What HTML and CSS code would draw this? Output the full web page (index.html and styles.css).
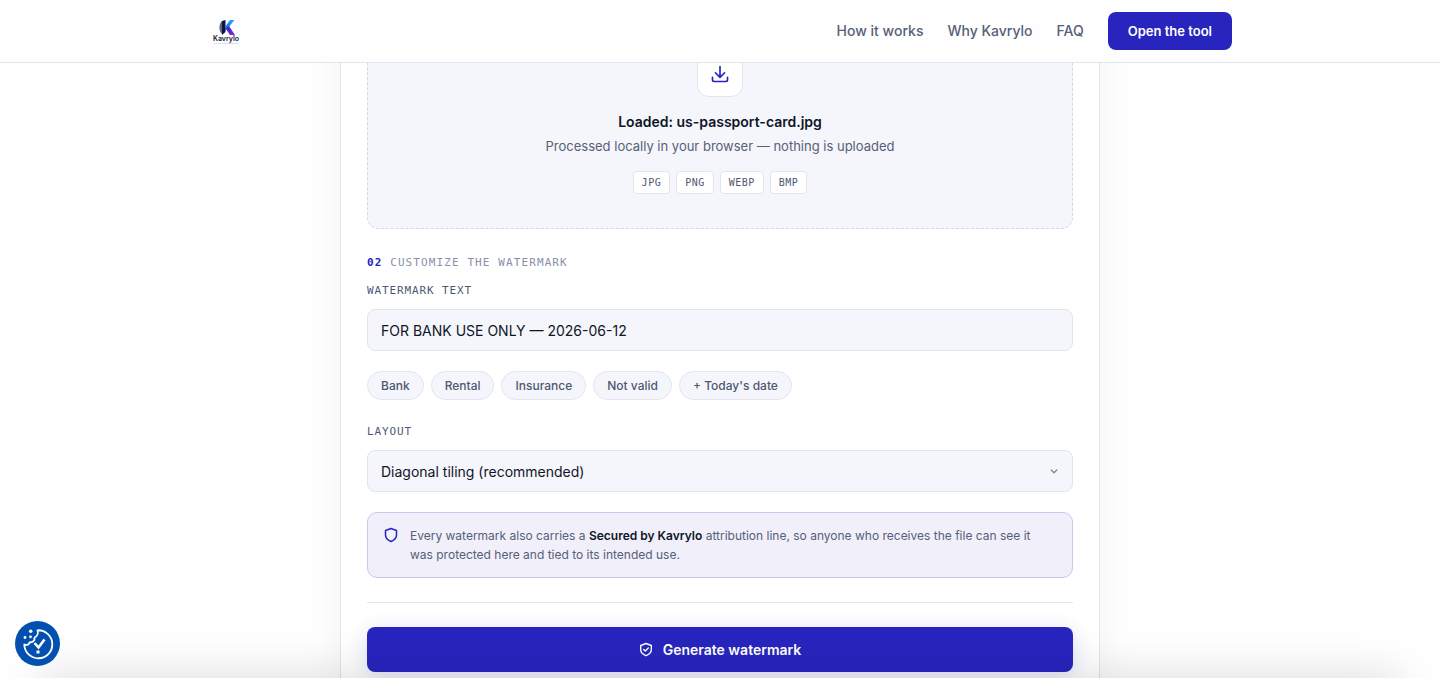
FILE: index.html
```
<!DOCTYPE html>
<html lang="en">

<head>
    <meta charset="UTF-8">
    <meta name="viewport" content="width=device-width, initial-scale=1.0">
    <title>Kavrylo</title>
    <link rel="stylesheet" href="styles.css">
</head>

<body>

    <header class="header">
        <div class="header-inner">
            <a class="logo" href="#" aria-label="Kavrylo">
                <svg width="36" height="36" viewBox="0 0 36 36">
                    <defs>
                        <linearGradient id="arm" x1="0" y1="1" x2="1" y2="0">
                            <stop offset="0" stop-color="#1d4ff0"/>
                            <stop offset="1" stop-color="#25b4fb"/>
                        </linearGradient>
                        <linearGradient id="leg" x1="0" y1="0" x2="1" y2="1">
                            <stop offset="0" stop-color="#1b2fb8"/>
                            <stop offset="1" stop-color="#9a1fe0"/>
                        </linearGradient>
                    </defs>
                    <path d="M14 8C10.500 11 10.500 18 14 21Z" fill="#5c6684"/>
                    <path d="M14 8L17.500 7V19L14 22Z" fill="#111638"/>
                    <path d="M17 14L22 7H26.500L20 15L17 18Z" fill="url(#arm)"/>
                    <path d="M18 16L21 13L27 22H22Z" fill="url(#leg)"/>
                    <text class="logo-text" x="18" y="28" text-anchor="middle">Kavrylo</text>
                    <path d="M6 30.500H30" stroke="#dcd8f8" stroke-width="1"/>
                </svg>
            </a>
            <nav class="nav">
                <a href="#">How it works</a>
                <a href="#">Why Kavrylo</a>
                <a href="#">FAQ</a>
                <a class="nav-btn" href="#">Open the tool</a>
            </nav>
        </div>
    </header>

    <main class="card">
        <!-- upload -->
        <section class="dropzone">
            <div class="drop-icon">
                <svg width="20" height="20" viewBox="0 0 24 24" fill="none" stroke="currentColor" stroke-width="2" stroke-linecap="round" stroke-linejoin="round">
                    <path d="M12 3v13M6.500 10.500L12 16l5.500-5.500M3 16v3a2 2 0 0 0 2 2h14a2 2 0 0 0 2-2v-3"/>
                </svg>
            </div>
            <h2 class="drop-title">Loaded: us-passport-card.jpg</h2>
            <p class="drop-sub">Processed locally in your browser — nothing is uploaded</p>
            <ul class="formats">
                <li>JPG</li>
                <li>PNG</li>
                <li>WEBP</li>
                <li>BMP</li>
            </ul>
        </section>

        <!-- options -->
        <h3 class="step"><b>02</b> CUSTOMIZE THE WATERMARK</h3>

        <label class="label" for="text">WATERMARK TEXT</label>
        <input class="field" id="text" type="text" value="FOR BANK USE ONLY — 2026-06-12">

        <div class="presets">
            <button type="button">Bank</button>
            <button type="button">Rental</button>
            <button type="button">Insurance</button>
            <button type="button">Not valid</button>
            <button type="button">+ Today's date</button>
        </div>

        <label class="label" for="layout">LAYOUT</label>
        <div class="select">
            <select class="field" id="layout">
                <option>Diagonal tiling (recommended)</option>
            </select>
            <svg class="chevron" width="8" height="8" viewBox="0 0 8 8" fill="none" stroke="currentColor" stroke-width="1.300" stroke-linecap="round" stroke-linejoin="round">
                <path d="M1.200 3l2.800 2.800 2.800-2.800"/>
            </svg>
        </div>

        <div class="notice">
            <svg width="14" height="18" viewBox="0 0 14 18" fill="none" stroke="currentColor" stroke-width="1.500" stroke-linejoin="round">
                <path d="M7 2.500L12.500 4.500V9C12.500 12 10 14.300 7 15.500C4 14.300 1.500 12 1.500 9V4.500Z"/>
            </svg>
            <p>Every watermark also carries a <strong>Secured by Kavrylo</strong> attribution line, so anyone who receives the file can see it was protected here and tied to its intended use.</p>
        </div>

        <div class="actions">
            <button class="generate" type="button">
                <svg width="14" height="16" viewBox="0 0 14 16" fill="none" stroke="currentColor" stroke-width="1.400" stroke-linecap="round" stroke-linejoin="round">
                    <path d="M7 1.500L12.300 3.500V7.500C12.300 10.500 10 12.500 7 13.700C4 12.500 1.700 10.500 1.700 7.500V3.500Z"/>
                    <path d="M4.700 7.500l1.600 1.600 3-3"/>
                </svg>
                Generate watermark
            </button>
        </div>
    </main>

    <div class="bottom-shade"></div>

    <button class="consent" type="button" aria-label="Cookie settings">
        <svg width="45" height="45" viewBox="0 0 45 45" fill="none">
            <path d="M22.500 9.300A14 14 0 1 1 9.300 23.500C12 24.500 14 23.500 14.500 21.500C18 21.500 20 19.500 19.500 16.500C22 15.500 23.500 12.500 22.500 9.300Z" stroke="#fff" stroke-width="1.800" stroke-linejoin="round"/>
            <circle cx="15.700" cy="10.200" r="1.800" fill="#fff"/>
            <circle cx="10" cy="16.500" r="1.400" fill="#fff"/>
            <circle cx="15.500" cy="15.800" r="1.400" fill="#fff"/>
            <path d="M19.500 22l4 4.500 6-8" stroke="#fff" stroke-width="2.600"/>
            <path d="M21.500 29.500h3v3h-3z" fill="#fff"/>
        </svg>
    </button>

</body>

</html>
```
FILE: styles.css
```
* {
    padding: 0;
    margin: 0;
    box-sizing: border-box;
}

body {
    font-family: Inter, "Liberation Sans", sans-serif;
    font-size: 14px;
    line-height: 20px;
    color: #0f1528;
    background-color: #fff;
    overflow: hidden;
}

button,
input,
select {
    font-family: inherit;
}

ul {
    list-style: none;
}

a {
    color: inherit;
    text-decoration: none;
}

/* header */
.header {
    position: fixed;
    top: 0;
    left: 0;
    right: 0;
    z-index: 10;
    background-color: #fefefe;
    border-bottom: 1px solid #e2e5f0;
}

.header-inner {
    max-width: 1080px;
    margin: 0 auto;
    padding: 12px 28px;
    display: flex;
    align-items: center;
    justify-content: space-between;
}

.logo svg {
    display: block;
}

.logo-text {
    font-size: 7px;
    font-weight: 600;
    fill: #111638;
}

.nav {
    display: flex;
    align-items: center;
    gap: 24px;
    font-weight: 500;
    color: #566079;
}

.nav-btn {
    padding: 9px 20px;
    border-radius: 8px;
    font-size: 13px;
    font-weight: 600;
    color: #fff;
    background-color: #2725be;
}

/* tool card */
.card {
    max-width: 760px;
    margin: 0 auto;
    padding: 16px 26px 26px;
    border: 1px solid #e2e2f2;
    border-top: 0;
    background-color: #fff;
    box-shadow: 0 8px 40px rgba(0, 0, 0, 0.05);
}

.dropzone {
    display: flex;
    flex-direction: column;
    align-items: center;
    padding: 34px;
    border: 1px dashed #d3d6e6;
    border-radius: 12px;
    background-color: #f5f6fb;
}

.drop-icon {
    width: 46px;
    height: 46px;
    display: flex;
    align-items: center;
    justify-content: center;
    border: 1px solid #e2e5f0;
    border-radius: 12px;
    color: #2725be;
    background-color: #fff;
}

.drop-title {
    margin-top: 15px;
    font-size: 14px;
    font-weight: 600;
}

.drop-sub {
    margin-top: 4px;
    font-size: 13px;
    color: #566079;
}

.formats {
    margin-top: 15px;
    display: flex;
    gap: 6px;
}

.formats li {
    padding: 0 8px;
    border: 1px solid #e2e5f0;
    border-radius: 4px;
    font-family: "DejaVu Sans Mono", monospace;
    font-size: 10px;
    line-height: 21px;
    letter-spacing: 0.05em;
    color: #4e5872;
    background-color: #fff;
}

.step,
.label {
    display: block;
    font-family: "DejaVu Sans Mono", monospace;
    font-size: 11px;
    line-height: 16px;
}

.step {
    margin: 26px 0 12px;
    font-weight: 400;
    letter-spacing: 0.1em;
    color: #8790a8;
}

.step b {
    color: #2725be;
}

.label {
    margin-bottom: 10px;
    letter-spacing: 0.08em;
    color: #4e5872;
}

.field {
    display: block;
    width: 100%;
    height: 42px;
    padding: 0 13px;
    border: 1px solid #e2e5f0;
    border-radius: 8px;
    font-size: 14px;
    color: #0f1528;
    background-color: #f5f6fb;
    appearance: none;
}

.presets {
    margin: 20px 0 24px;
    display: flex;
    flex-wrap: wrap;
    gap: 7px;
}

.presets button {
    padding: 0 13px;
    border: 1px solid #e2e5f0;
    border-radius: 15px;
    font-size: 12px;
    font-weight: 500;
    line-height: 27px;
    color: #4e5872;
    background-color: #f5f6fb;
}

.select {
    position: relative;
}

.chevron {
    position: absolute;
    right: 15px;
    top: 17px;
    color: #7b849c;
    pointer-events: none;
}

.notice {
    margin-top: 20px;
    padding: 13px 24px 13px 16px;
    display: flex;
    gap: 12px;
    border: 1px solid #c9c7ee;
    border-radius: 10px;
    font-size: 12px;
    line-height: 19px;
    color: #566079;
    background-color: #f0effa;
}

.notice svg {
    flex: none;
    color: #2725be;
}

.notice strong {
    font-weight: 600;
    color: #0f1528;
}

.actions {
    margin-top: 24px;
    padding-top: 24px;
    border-top: 1px solid #e2e5f0;
}

.generate {
    width: 100%;
    height: 45px;
    display: flex;
    align-items: center;
    justify-content: center;
    gap: 10px;
    border: 0;
    border-radius: 8px;
    font-size: 14px;
    font-weight: 600;
    color: #fff;
    background-color: #2725be;
    box-shadow: 0 4px 20px rgba(39, 37, 190, 0.16);
}

/* soft shade along the bottom edge */
.bottom-shade {
    position: fixed;
    left: 40px;
    right: 40px;
    top: 100%;
    height: 60px;
    box-shadow: 0 0 50px rgba(0, 0, 0, 0.15);
    pointer-events: none;
}

.consent {
    position: fixed;
    left: 15px;
    bottom: 12px;
    width: 45px;
    height: 45px;
    border: 0;
    border-radius: 50%;
    background-color: #0450b0;
}
```
